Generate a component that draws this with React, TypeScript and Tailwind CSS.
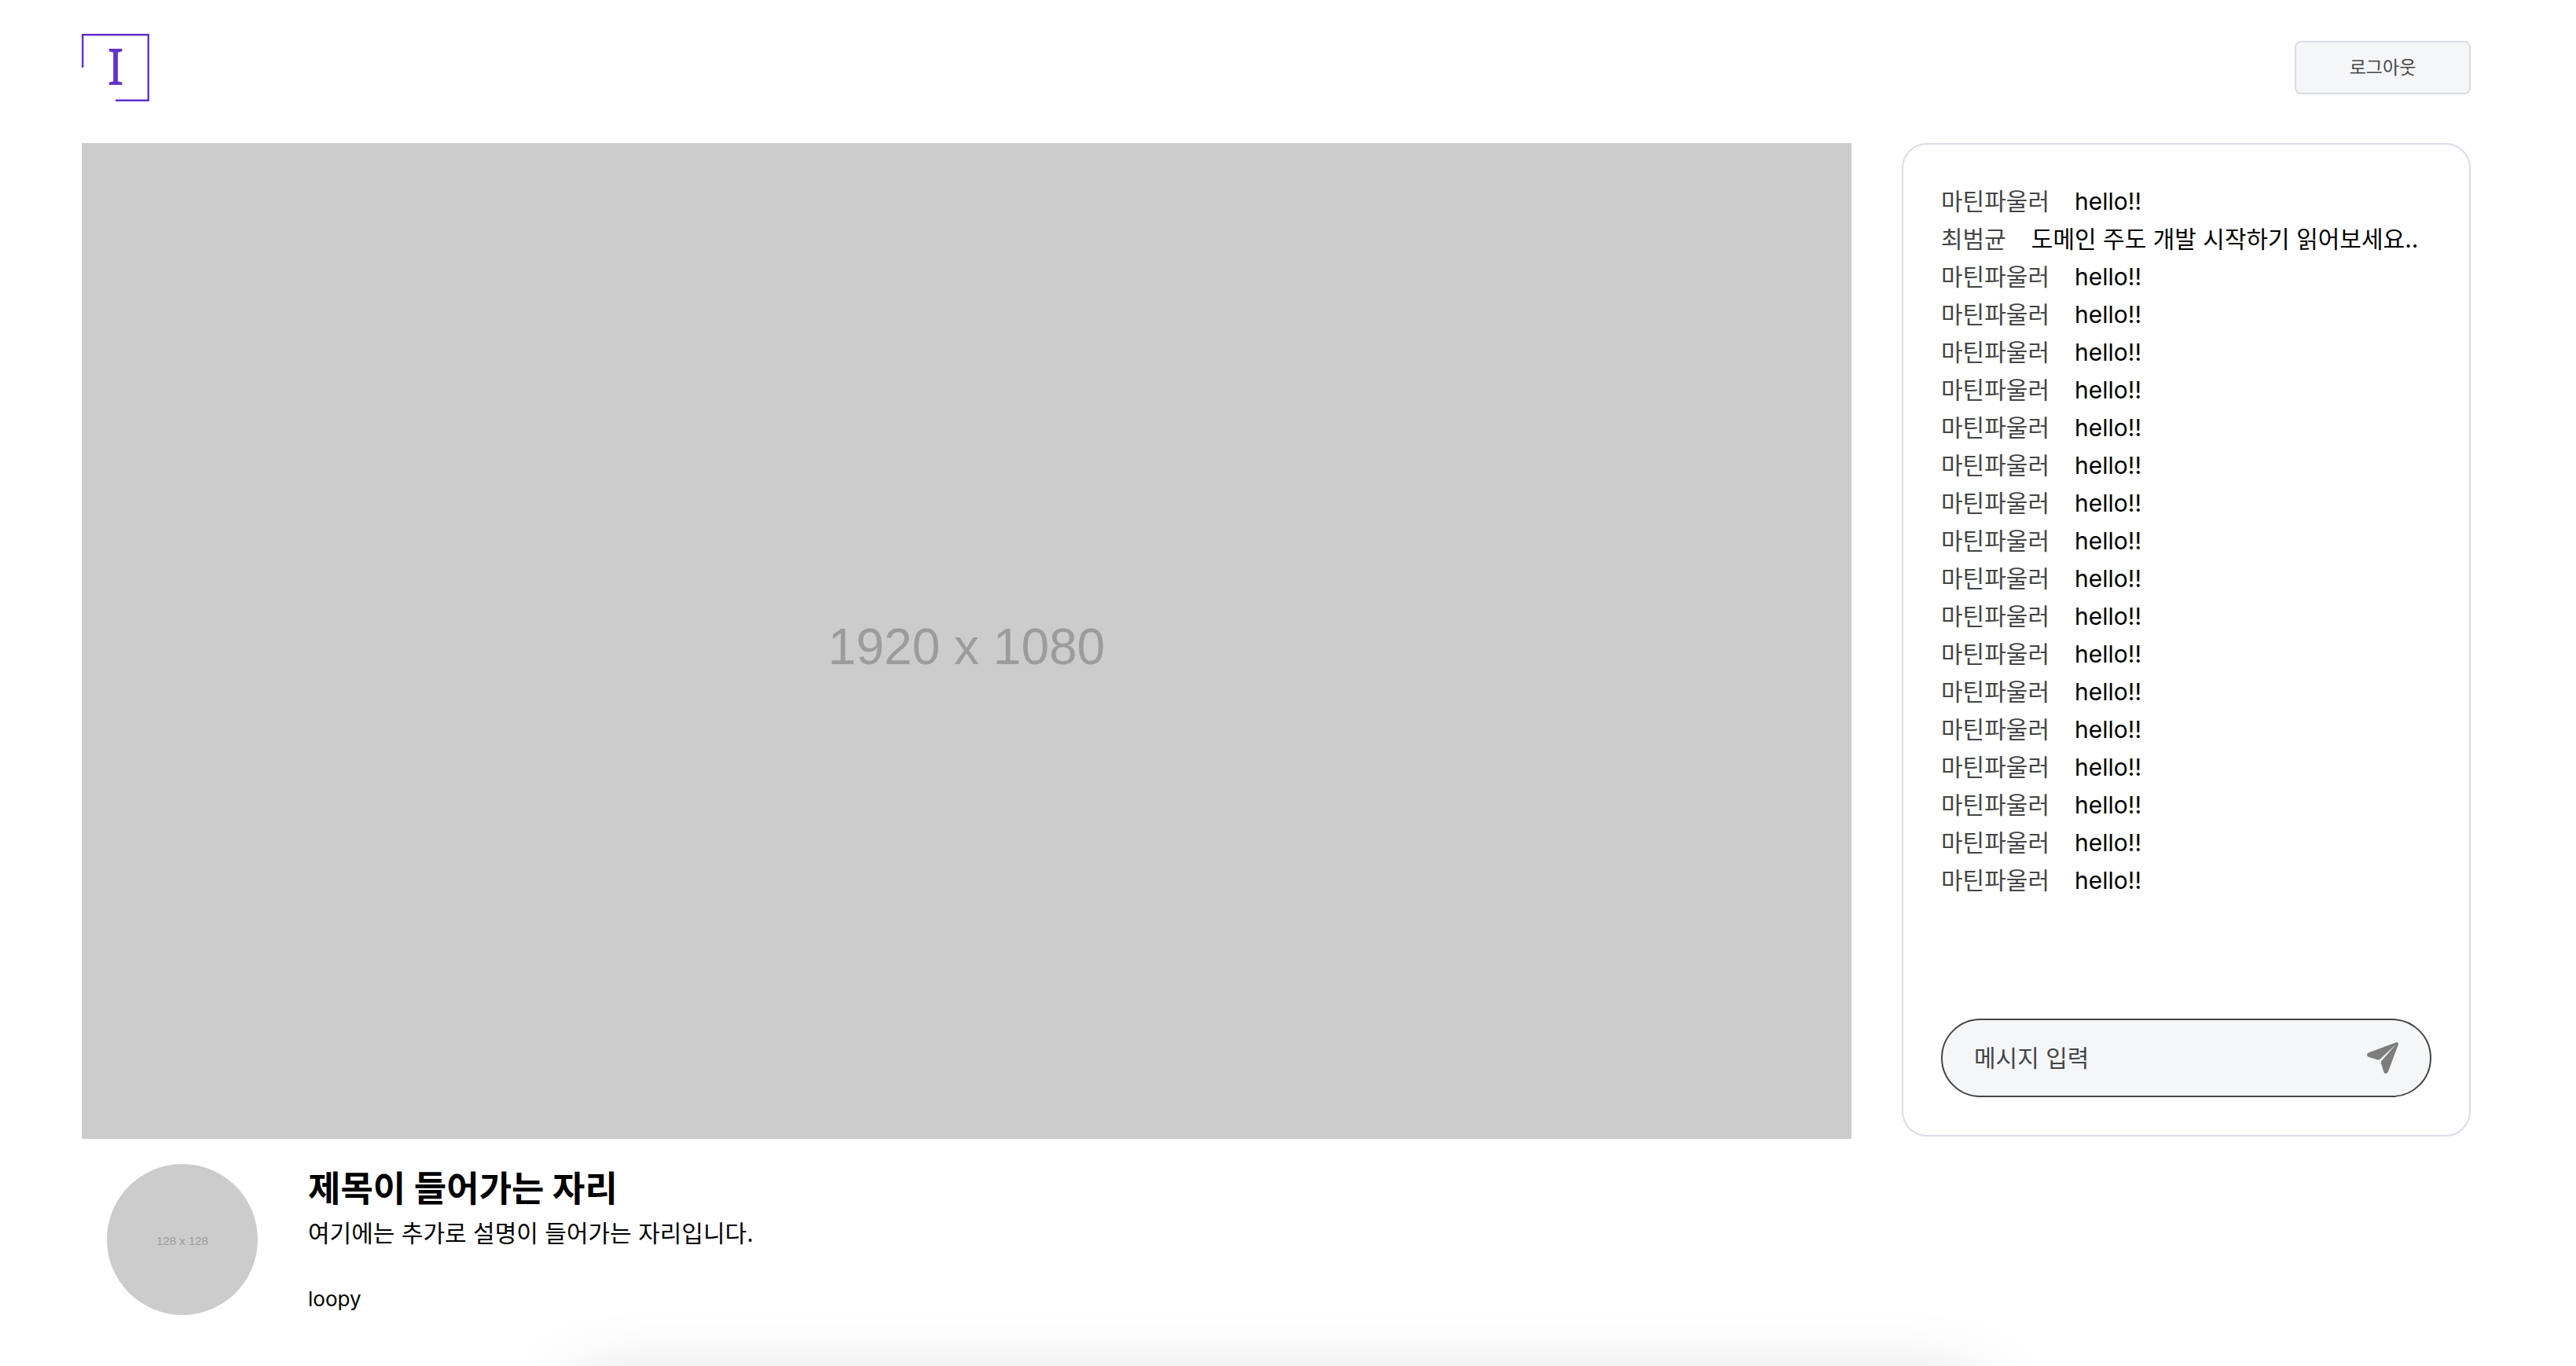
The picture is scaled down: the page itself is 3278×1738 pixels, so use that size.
const messages = [
  { id: 1, name: '마틴파울러', text: 'hello!!' },
  { id: 2, name: '최범균', text: '도메인 주도 개발 시작하기 읽어보세요..' },
  ...Array.from({ length: 17 }, (_, i) => ({ id: i + 3, name: '마틴파울러', text: 'hello!!' })),
];

function Logo() {
  return (
    <a href="#" aria-label="홈" className="block">
      <svg viewBox="0 0 86 86" className="size-[86px] overflow-visible" fill="none">
        <path d="M1.2 43V1.2H84.8V84.8H43" stroke="#6431cb" strokeWidth="2.4" />
        <text x="43" y="65" textAnchor="middle" fill="#6431cb" className="font-['Noto_Sans'] text-[64px]">
          I
        </text>
      </svg>
    </a>
  );
}

function SendIcon() {
  return (
    <svg viewBox="0 0 40 40" className="size-10" fill="#7d7d7d">
      <path d="M36.6.4 2.2 13.2C-.6 14.300-.7 17.600 2 18.700L13 22.300C14.600 22.800 15.800 22.400 17 21.200L37.500 2.200 19 23.200C18 24.300 17.700 25.400 18 27L21.200 37.600C22 40.600 25.600 40.700 26.800 37.800L39.800 3.200C40.500 1 38.700-.4 36.600.4Z" />
    </svg>
  );
}

function Header() {
  return (
    <header className="flex items-center justify-between pt-[43px]">
      <Logo />
      <button
        type="button"
        className="h-[68px] w-56 rounded-lg border-2 border-[#dcdbe7] bg-[#f4f6f8] text-[23px] font-normal text-[#454545]"
      >
        로그아웃
      </button>
    </header>
  );
}

function Player() {
  return (
    <section className="min-w-0 flex-1">
      <div className="flex aspect-video items-center justify-center bg-[#cccccc] pt-4 font-['Liberation_Sans',sans-serif] text-[64px] text-[#9c9c9c]">
        1920 x 1080
      </div>
      <div className="flex gap-16 p-8">
        <div className="flex size-48 shrink-0 items-center justify-center rounded-full bg-[#cccccc] pt-1 font-['Liberation_Sans',sans-serif] text-[15px] text-[#9c9c9c]">
          128 x 128
        </div>
        <div className="flex flex-col">
          <h1 className="text-[45px] leading-[64px] font-bold">제목이 들어가는 자리</h1>
          <p className="text-[30px] leading-[48px]">여기에는 추가로 설명이 들어가는 자리입니다.</p>
          <p className="mt-10 text-[26px] leading-10">loopy</p>
        </div>
      </div>
    </section>
  );
}

function Chat() {
  return (
    <aside className="flex h-[1264px] w-[724px] shrink-0 flex-col justify-between rounded-[32px] border-2 border-[#dcdbe7] p-12">
      <ul className="text-[30px] leading-[48px]">
        {messages.map((m) => (
          <li key={m.id} className="flex gap-8 whitespace-nowrap">
            <span className="text-[#454545]">{m.name}</span>
            <span>{m.text}</span>
          </li>
        ))}
      </ul>
      <form
        className="flex h-[100px] items-center rounded-full border-2 border-[#454545] bg-[#f4f6f8] px-10"
        onSubmit={(e) => e.preventDefault()}
      >
        <input
          type="text"
          aria-label="메시지 입력"
          placeholder="메시지 입력"
          className="min-w-0 flex-1 bg-transparent text-[30px] outline-none placeholder:text-[#454545] placeholder:opacity-100"
        />
        <button type="submit" aria-label="보내기">
          <SendIcon />
        </button>
      </form>
    </aside>
  );
}

export default function App() {
  return (
    <div className="min-h-screen bg-white pr-[134px] pl-[104px] font-['Inter','Noto_Sans_CJK_KR',sans-serif] text-black">
      <Header />
      <main className="mt-[53px] flex items-start gap-16">
        <Player />
        <Chat />
      </main>
      <div className="fixed top-full left-[724px] h-40 w-[1800px] rounded-3xl shadow-[0_24px_96px_rgba(0,0,0,0.16)]" />
    </div>
  );
}
